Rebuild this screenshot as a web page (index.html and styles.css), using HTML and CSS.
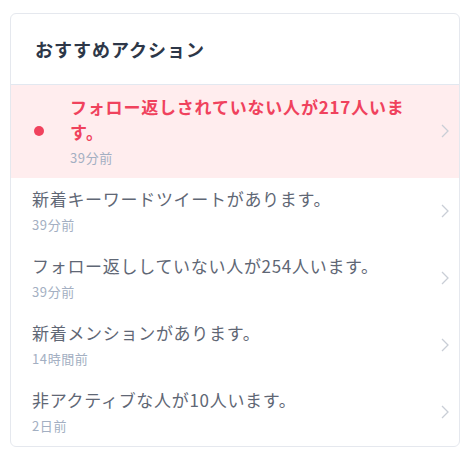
FILE: index.html
```html
<!DOCTYPE html>
<html lang="ja">
<head>
  <meta charset="UTF-8" />
  <meta name="viewport" content="width=device-width, initial-scale=1.0"/>
  <title>おすすめアクション</title>
  <link rel="stylesheet" href="styles.css">
</head>
<body>
  <div class="action-card">
    <h2 class="action-title">おすすめアクション</h2>

    <a class="action-row unread" href="#">
      <span class="dot"></span>
      <div class="action-body">
        <div class="action-text">フォロー返しされていない人が217人います。</div>
        <div class="action-time">39分前</div>
      </div>
      <svg class="chevron" viewBox="0 0 8 14"><path d="M1 1 L7 7 L1 13" /></svg>
    </a>

    <a class="action-row" href="#">
      <div class="action-body">
        <div class="action-text">新着キーワードツイートがあります。</div>
        <div class="action-time">39分前</div>
      </div>
      <svg class="chevron" viewBox="0 0 8 14"><path d="M1 1 L7 7 L1 13" /></svg>
    </a>

    <a class="action-row" href="#">
      <div class="action-body">
        <div class="action-text">フォロー返ししていない人が254人います。</div>
        <div class="action-time">39分前</div>
      </div>
      <svg class="chevron" viewBox="0 0 8 14"><path d="M1 1 L7 7 L1 13" /></svg>
    </a>

    <a class="action-row" href="#">
      <div class="action-body">
        <div class="action-text">新着メンションがあります。</div>
        <div class="action-time">14時間前</div>
      </div>
      <svg class="chevron" viewBox="0 0 8 14"><path d="M1 1 L7 7 L1 13" /></svg>
    </a>

    <a class="action-row" href="#">
      <div class="action-body">
        <div class="action-text">非アクティブな人が10人います。</div>
        <div class="action-time">2日前</div>
      </div>
      <svg class="chevron" viewBox="0 0 8 14"><path d="M1 1 L7 7 L1 13" /></svg>
    </a>
  </div>
</body>
</html>
```

FILE: styles.css
```css
body {
  margin: 0;
  padding: 13px 6px 0 10px;
  background: #fff;
  font-family: "Noto Sans CJK JP", "Noto Sans", sans-serif;
}

.action-card {
  background: #fff;
  border: 1px solid #e5e8ee;
  border-radius: 6px;
  overflow: hidden;
}

.action-title {
  margin: 0;
  padding: 23px 24px;
  font-size: 18px;
  line-height: 24px;
  letter-spacing: 1px;
  font-weight: bold;
  color: #2d3748;
  border-bottom: 1px solid #e2e8f0;
}

.action-row {
  display: flex;
  align-items: center;
  padding: 9px 10px 10px 21px;
  text-decoration: none;
}

.action-body {
  flex: 1;
}

.action-text {
  font-size: 17px;
  line-height: 24px;
  letter-spacing: 0.7px;
  color: #5f6775;
}

.action-time {
  margin-top: 4px;
  font-size: 13px;
  line-height: 20px;
  letter-spacing: 0.6px;
  color: #a3afc2;
}

.chevron {
  width: 8px;
  height: 14px;
  margin-left: 29px;
  fill: none;
  stroke: #c9ced6;
  stroke-width: 1.3;
}

.action-row.unread {
  background: #ffedee;
  padding-left: 23px;
}

.unread .dot {
  width: 10px;
  height: 10px;
  border-radius: 50%;
  background: #f0425d;
  margin-right: 26px;
  flex-shrink: 0;
}

.unread .action-text {
  color: #f0425d;
  font-weight: bold;
  line-height: 25px;
  letter-spacing: 0.8px;
}
```
